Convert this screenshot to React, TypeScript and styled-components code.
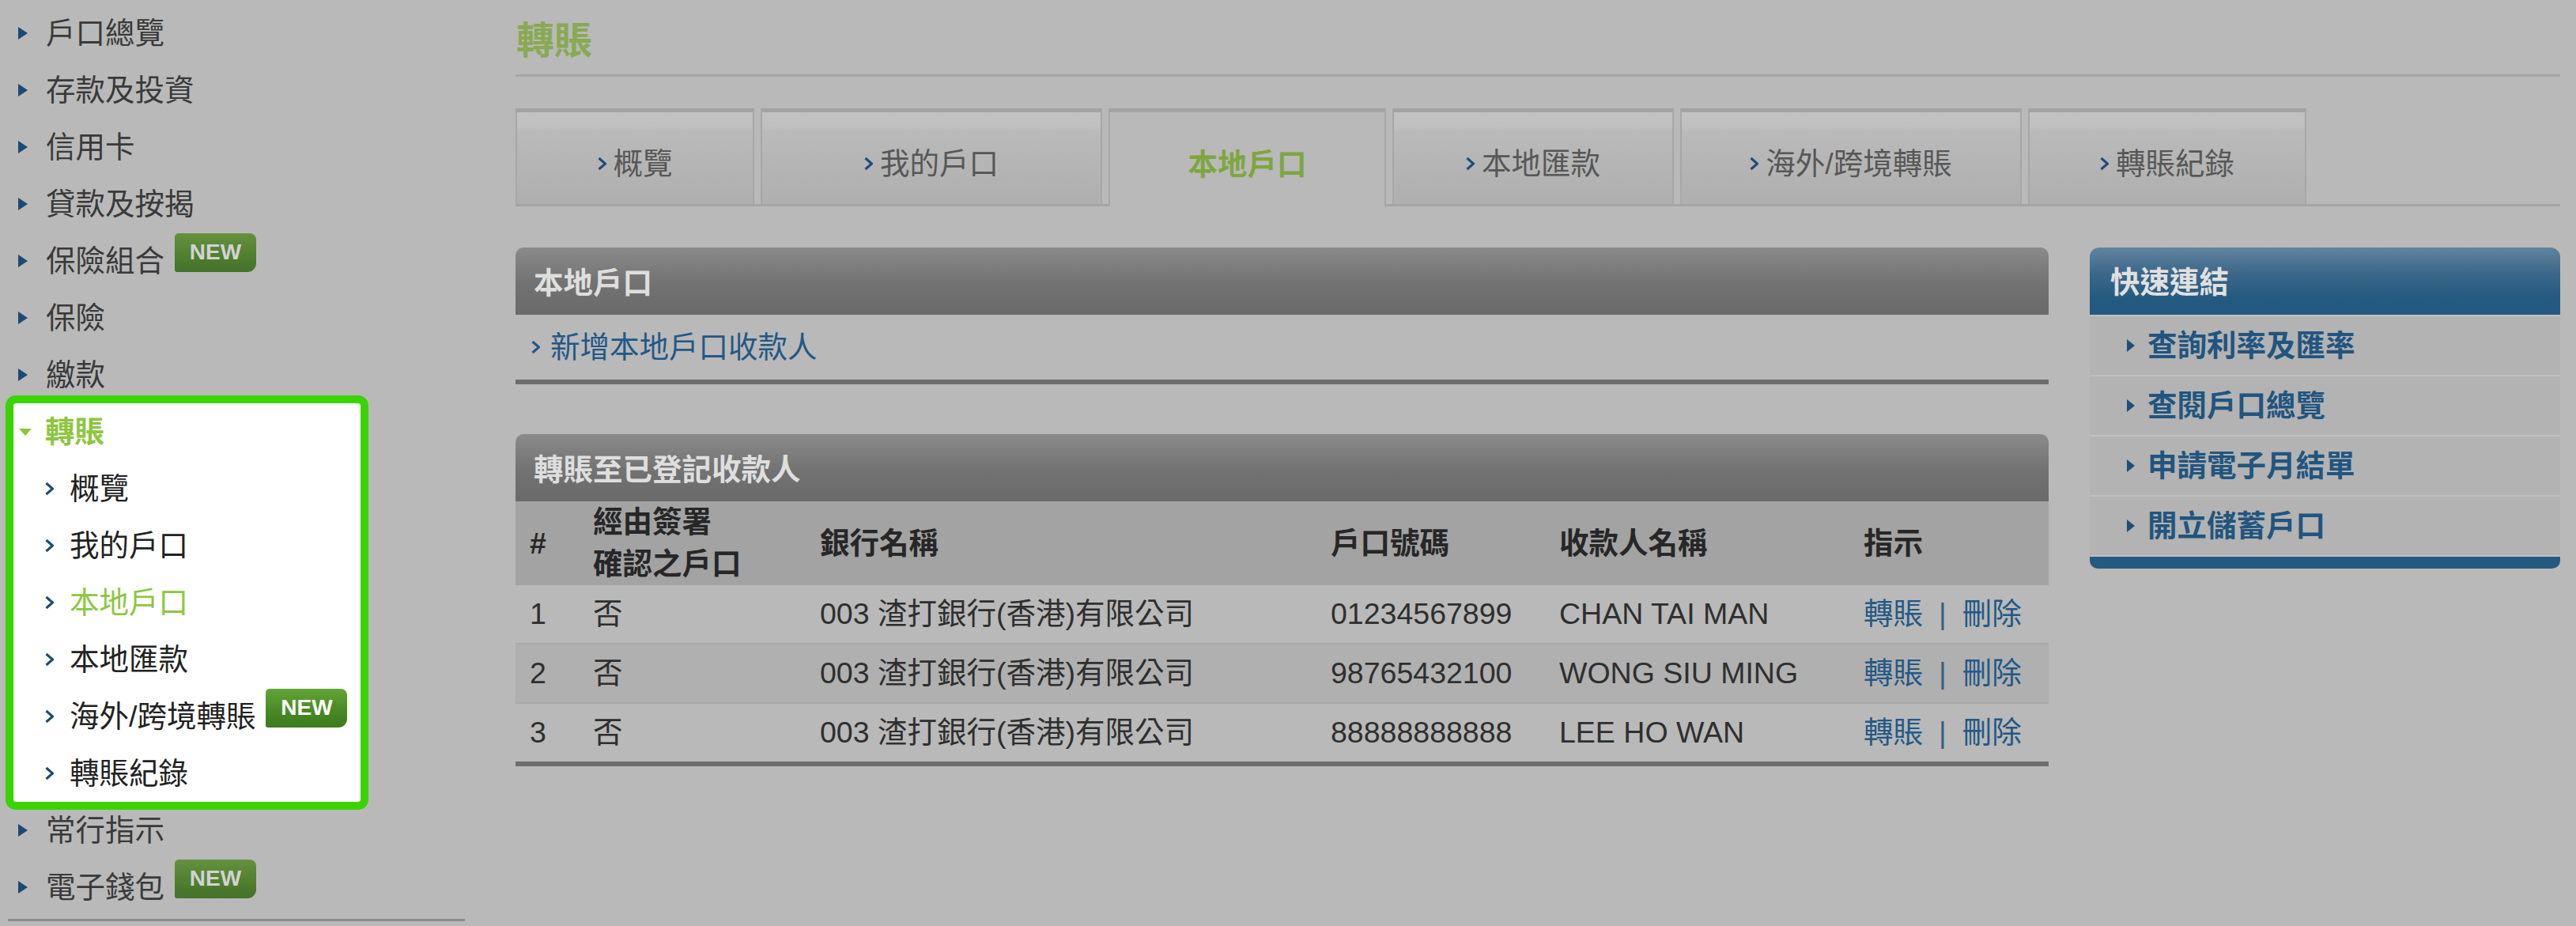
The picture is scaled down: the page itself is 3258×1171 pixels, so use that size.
import React from "react";
import styled, { createGlobalStyle } from "styled-components";

const FONT = `"Liberation Sans", "Noto Sans CJK TC", sans-serif`;

const GlobalStyle = createGlobalStyle`
  html, body {
    margin: 0;
    padding: 0;
    background: #b9b9b9;
  }
  body {
    font-family: ${FONT};
    font-size: 37.5px;
    line-height: 45px;
    color: #3c3c3c;
  }
  * { box-sizing: border-box; }
`;

const Page = styled.div`
  display: flex;
  align-items: flex-start;
  width: 3258px;
  min-height: 1171px;
`;

/* ---------- left menu ---------- */

const Sidebar = styled.nav`
  flex: none;
  width: 588px;
  padding-top: 6px;
`;

const NavRow = styled.div<{ $pad: number }>`
  display: flex;
  align-items: center;
  height: 72px;
  padding-left: ${p => p.$pad}px;
  white-space: nowrap;
`;

const NavArrow = styled.span`
  flex: none;
  width: 0;
  height: 0;
  margin-right: 23px;
  border-left: 12px solid #1d4a72;
  border-top: 8px solid transparent;
  border-bottom: 8px solid transparent;
`;

const OpenArrow = styled.span`
  flex: none;
  width: 0;
  height: 0;
  margin-right: 17px;
  border-top: 9px solid #8cc63f;
  border-left: 8px solid transparent;
  border-right: 8px solid transparent;
`;

const NavLabel = styled.span<{ $tone: "dim" | "dark" | "green"; $bold?: boolean }>`
  color: ${p => (p.$tone === "green" ? "#8cc63f" : p.$tone === "dark" ? "#222222" : "#3a3a3a")};
  font-weight: ${p => (p.$bold ? "bold" : "normal")};
`;

const NewBadge = styled.span<{ $lit?: boolean }>`
  flex: none;
  display: inline-flex;
  align-items: center;
  justify-content: center;
  width: 103px;
  height: 49px;
  margin-left: 13px;
  margin-bottom: 22px;
  font: bold 28px "Liberation Sans", sans-serif;
  color: ${p => (p.$lit ? "#ffffff" : "#d2d2d2")};
  background: ${p =>
    p.$lit
      ? "linear-gradient(#62a635, #4a8a26 55%, #3c7a1c)"
      : "linear-gradient(#65913f, #51802f 55%, #44722a)"};
  border-radius: 5px 8px 11px 3px;
`;

const Highlight = styled.div`
  width: 439px;
  margin-left: 17px;
  background: #ffffff;
  outline: 10px solid #3ad400;
  border-radius: 3px;
`;

const BottomRule = styled.div`
  height: 3px;
  margin: 4px 0 0 10px;
  background: #8b8b8b;
`;

const ChevronSvg = styled.svg`
  flex: none;
`;

const Chevron: React.FC<{ color: string; gap: number }> = ({ color, gap }) => (
  <ChevronSvg width="11" height="18" viewBox="0 0 11 18" style={{ marginRight: gap }}>
    <path d="M1.5 2 L9.5 9 L1.5 16" fill="none" stroke={color} strokeWidth="3" />
  </ChevronSvg>
);

/* ---------- main column ---------- */

const Main = styled.main`
  flex: none;
  width: 2586px;
  margin-left: 64px;
`;

const PageTitle = styled.h1`
  margin: 0;
  padding: 28px 0 18px 1px;
  font-size: 48px;
  line-height: 48px;
  font-weight: bold;
  color: #88aa52;
  border-bottom: 3px solid #a5a5a5;
`;

const TabBar = styled.div`
  display: flex;
  align-items: flex-start;
  gap: 8px;
  height: 124px;
  margin-top: 40px;
  border-bottom: 3px solid #a5a5a5;
`;

const Tab = styled.div<{ $w: number; $active?: boolean }>`
  flex: none;
  display: flex;
  align-items: center;
  justify-content: center;
  width: ${p => p.$w}px;
  height: ${p => (p.$active ? 124 : 121)}px;
  padding-top: 14px;
  border: 2px solid #a7a7a7;
  border-top: 5px solid #a3a3a3;
  border-bottom: none;
  background: ${p =>
    p.$active
      ? "#b9b9b9"
      : "linear-gradient(#c3c3c3 0, #c0c0c0 18px, #bababa 24px, #afafaf 100%)"};
  color: ${p => (p.$active ? "#7ea640" : "#575757")};
  font-weight: ${p => (p.$active ? "bold" : "normal")};
  white-space: nowrap;
`;

const Columns = styled.div`
  display: flex;
  align-items: flex-start;
  gap: 52px;
  margin-top: 52px;
`;

const MainCol = styled.div`
  width: 1939px;
`;

const SideCol = styled.aside`
  width: 595px;
`;

const Panel = styled.section<{ $top?: number }>`
  margin-top: ${p => p.$top ?? 0}px;
  border-bottom: 6px solid #6d6d6d;
`;

const PanelHead = styled.div`
  display: flex;
  align-items: center;
  height: 85px;
  padding: 6px 0 0 23px;
  border-radius: 10px 10px 0 0;
  background: linear-gradient(#8a8a8a, #727272 55%, #6a6a6a);
  color: #dedede;
  font-weight: bold;
`;

const LinkRow = styled.div`
  display: flex;
  align-items: center;
  height: 82px;
  padding-left: 20px;
`;

const BlueLink = styled.a`
  color: #235886;
  text-decoration: none;
`;

const TableRow = styled.div<{ $head?: boolean; $shade?: boolean; $rule?: boolean }>`
  display: grid;
  grid-template-columns: 80px 287px 646px 289px 385px 1fr;
  align-items: center;
  height: ${p => (p.$head ? 106 : p.$rule ? 75 : 73)}px;
  line-height: ${p => (p.$head ? "53px" : "45px")};
  border-top: ${p => (p.$rule ? "2px solid #a9a9a9" : "none")};
  background: ${p => (p.$head ? "#a3a3a3" : p.$shade ? "#b0b0b0" : "#b9b9b9")};
  color: ${p => (p.$head ? "#272727" : "#2f2f2f")};
  font-weight: ${p => (p.$head ? "bold" : "normal")};
`;

const Cell = styled.div`
  padding-left: 18px;
  white-space: nowrap;
`;

const Divider = styled.span`
  margin: 0 20px;
  color: #35607f;
`;

/* ---------- quick links ---------- */

const QuickHead = styled.div`
  display: flex;
  align-items: center;
  height: 85px;
  padding: 4px 0 0 26px;
  border-radius: 12px 12px 0 0;
  background: linear-gradient(#62849e, #3a6689 40%, #255a80 75%, #245a80);
  color: #e0e0e0;
  font-weight: bold;
`;

const QuickList = styled.ul`
  display: flex;
  flex-direction: column;
  gap: 2px;
  margin: 0;
  padding: 2px 0;
  list-style: none;
  background: #c0c0c0;
`;

const QuickItem = styled.li`
  display: flex;
  align-items: center;
  height: 74px;
  padding-left: 47px;
  background: #b3b3b3;
  color: #21557f;
  font-weight: bold;
`;

const QuickArrow = styled.span`
  flex: none;
  width: 0;
  height: 0;
  margin-right: 16px;
  border-left: 10px solid #1e4f78;
  border-top: 8px solid transparent;
  border-bottom: 8px solid transparent;
`;

const QuickFoot = styled.div`
  height: 15px;
  border-radius: 0 0 10px 10px;
  background: #245a80;
`;

/* ---------- data ---------- */

const topItems: { label: string; isNew?: boolean }[] = [
  { label: "戶口總覽" },
  { label: "存款及投資" },
  { label: "信用卡" },
  { label: "貸款及按揭" },
  { label: "保險組合", isNew: true },
  { label: "保險" },
  { label: "繳款" },
];

const subItems: { label: string; active?: boolean; isNew?: boolean }[] = [
  { label: "概覽" },
  { label: "我的戶口" },
  { label: "本地戶口", active: true },
  { label: "本地匯款" },
  { label: "海外/跨境轉賬", isNew: true },
  { label: "轉賬紀錄" },
];

const afterItems: { label: string; isNew?: boolean }[] = [
  { label: "常行指示" },
  { label: "電子錢包", isNew: true },
];

const tabs = [
  { label: "概覽", w: 302 },
  { label: "我的戶口", w: 432 },
  { label: "本地戶口", w: 351, active: true },
  { label: "本地匯款", w: 356 },
  { label: "海外/跨境轉賬", w: 432 },
  { label: "轉賬紀錄", w: 352 },
];

const payees = [
  { no: 1, acc: "01234567899", name: "CHAN TAI MAN" },
  { no: 2, acc: "98765432100", name: "WONG SIU MING" },
  { no: 3, acc: "88888888888", name: "LEE HO WAN" },
];

const quickLinks = ["查詢利率及匯率", "查閱戶口總覽", "申請電子月結單", "開立儲蓄戶口"];

const App: React.FC = () => {
  return (
    <>
      <GlobalStyle />
      <Page>
        <Sidebar>
          {topItems.map(item => (
            <NavRow key={item.label} $pad={23}>
              <NavArrow />
              <NavLabel $tone="dim">{item.label}</NavLabel>
              {item.isNew && <NewBadge>NEW</NewBadge>}
            </NavRow>
          ))}
          <Highlight>
            <NavRow $pad={7}>
              <OpenArrow />
              <NavLabel $tone="green" $bold>轉賬</NavLabel>
            </NavRow>
            {subItems.map(item => (
              <NavRow key={item.label} $pad={40}>
                <Chevron color="#1d4a72" gap={20} />
                <NavLabel $tone={item.active ? "green" : "dark"}>{item.label}</NavLabel>
                {item.isNew && <NewBadge $lit>NEW</NewBadge>}
              </NavRow>
            ))}
          </Highlight>
          {afterItems.map(item => (
            <NavRow key={item.label} $pad={23}>
              <NavArrow />
              <NavLabel $tone="dim">{item.label}</NavLabel>
              {item.isNew && <NewBadge>NEW</NewBadge>}
            </NavRow>
          ))}
          <BottomRule />
        </Sidebar>

        <Main>
          <PageTitle>轉賬</PageTitle>
          <TabBar>
            {tabs.map(t => (
              <Tab key={t.label} $w={t.w} $active={t.active}>
                {!t.active && <Chevron color="#1f4c78" gap={9} />}
                {t.label}
              </Tab>
            ))}
          </TabBar>

          <Columns>
            <MainCol>
              <Panel>
                <PanelHead>本地戶口</PanelHead>
                <LinkRow>
                  <Chevron color="#235886" gap={13} />
                  <BlueLink href="#">新增本地戶口收款人</BlueLink>
                </LinkRow>
              </Panel>

              <Panel $top={63}>
                <PanelHead>轉賬至已登記收款人</PanelHead>
                <TableRow $head>
                  <Cell>#</Cell>
                  <Cell>經由簽署<br />確認之戶口</Cell>
                  <Cell>銀行名稱</Cell>
                  <Cell>戶口號碼</Cell>
                  <Cell>收款人名稱</Cell>
                  <Cell>指示</Cell>
                </TableRow>
                {payees.map((p, i) => (
                  <TableRow key={p.no} $shade={i % 2 === 1} $rule={i > 0}>
                    <Cell>{p.no}</Cell>
                    <Cell>否</Cell>
                    <Cell>003 渣打銀行(香港)有限公司</Cell>
                    <Cell>{p.acc}</Cell>
                    <Cell>{p.name}</Cell>
                    <Cell>
                      <BlueLink href="#">轉賬</BlueLink>
                      <Divider>|</Divider>
                      <BlueLink href="#">刪除</BlueLink>
                    </Cell>
                  </TableRow>
                ))}
              </Panel>
            </MainCol>

            <SideCol>
              <QuickHead>快速連結</QuickHead>
              <QuickList>
                {quickLinks.map(q => (
                  <QuickItem key={q}>
                    <QuickArrow />
                    {q}
                  </QuickItem>
                ))}
              </QuickList>
              <QuickFoot />
            </SideCol>
          </Columns>
        </Main>
      </Page>
    </>
  );
};

export default App;
